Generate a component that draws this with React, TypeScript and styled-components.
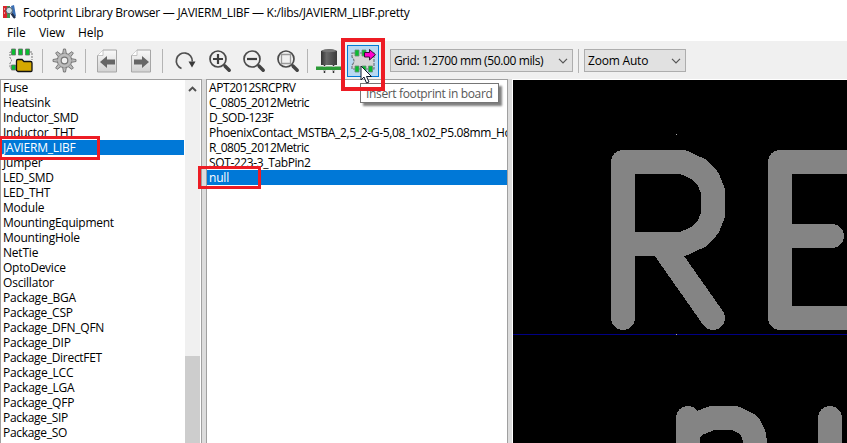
import React from "react";
import styled, { createGlobalStyle } from "styled-components";

const Global = createGlobalStyle`
  * { box-sizing: border-box; }
  body { margin: 0; overflow: hidden; }
`;

const Window = styled.div`
  position: relative;
  display: flex;
  flex-direction: column;
  width: 847px;
  height: 443px;
  overflow: hidden;
  background: #fff;
  color: #000;
  font: 12px "Open Sans", "Noto Sans", sans-serif;
`;

const TitleBar = styled.header`
  display: flex;
  align-items: center;
  gap: 7px;
  height: 24px;
  padding-left: 3px;
`;

const Text = styled.span<{ $ls?: number }>`
  display: block;
  line-height: 15px;
  white-space: pre;
  letter-spacing: ${(p) => p.$ls ?? -0.25}px;
`;

const MenuBar = styled.nav`
  display: flex;
  align-items: center;
  height: 17px;
  padding: 0 0 1px 7px;
`;

const MenuItem = styled.span<{ $w: number }>`
  width: ${(p) => p.$w}px;
  letter-spacing: -0.1px;
`;

const Toolbar = styled.div`
  display: flex;
  align-items: center;
  height: 38px;
  padding: 1px 0 0 8px;
  background: #f0f0f0;
`;

const Icon = styled.svg<{ $ml?: number }>`
  flex: none;
  display: block;
  margin-left: ${(p) => p.$ml ?? 0}px;
`;

const Separator = styled.i<{ $ml: number }>`
  flex: none;
  width: 1px;
  height: 24px;
  margin-left: ${(p) => p.$ml}px;
  background: #b4b4b4;
`;

const ActiveButton = styled.button`
  flex: none;
  width: 32px;
  height: 32px;
  margin: 1px 0 0 5px;
  padding: 0;
  border: 1px solid #0078d7;
  background: #b8d8f1;
`;

const Combo = styled.div<{ $w: number; $ml: number }>`
  flex: none;
  display: flex;
  align-items: center;
  justify-content: space-between;
  width: ${(p) => p.$w}px;
  height: 23px;
  margin-left: ${(p) => p.$ml}px;
  padding: 0 4px 0 3px;
  border: 1px solid #adadad;
  background: #e1e1e1;
`;

const Panels = styled.main`
  display: flex;
  flex: 1;
  min-height: 0;
  background: #dcdcdc;
`;

const ListBox = styled.section<{ $w: number; $mr: number }>`
  flex: none;
  display: flex;
  width: ${(p) => p.$w}px;
  margin-right: ${(p) => p.$mr}px;
  border: 1px solid #a0a0a0;
  border-bottom: 0;
  background: #fff;
  overflow: hidden;
`;

const Rows = styled.div`
  flex: 1;
  min-width: 0;
  overflow: hidden;
`;

const Row = styled.div<{ $selected?: boolean }>`
  height: 15px;
  padding-left: 2px;
  overflow: hidden;
  color: ${(p) => (p.$selected ? "#fff" : "#000")};
  background: ${(p) => (p.$selected ? "#0078d7" : "transparent")};
`;

const ScrollBar = styled.div`
  display: flex;
  flex-direction: column;
  justify-content: space-between;
  width: 16px;
  margin-left: 1px;
  border-right: 1px solid #fff;
  background: #f0f0f0;
`;

const Thumb = styled.div`
  height: 87px;
  background: #cdcdcd;
`;

const Canvas = styled.section`
  flex: 1;
  border-top: 1px solid #fff;
  border-left: 1px solid #fff;
  background: #000;
`;

const Highlight = styled.div<{ $x: number; $y: number; $w: number; $h: number; $b?: number }>`
  position: absolute;
  left: ${(p) => p.$x}px;
  top: ${(p) => p.$y}px;
  width: ${(p) => p.$w}px;
  height: ${(p) => p.$h}px;
  border: ${(p) => p.$b ?? 3}px solid #ed1c24;
`;

const Tooltip = styled.div`
  position: absolute;
  left: 360px;
  top: 83px;
  width: 139px;
  height: 20px;
  padding: 2px 0 0 5px;
  border: 1px solid #767676;
  background: #fff;
  box-shadow: 3px 3px 2px rgba(0, 0, 0, 0.5);
  color: #575757;
`;

const Cursor = styled.svg`
  position: absolute;
  left: 360px;
  top: 65px;
`;

const libraries: [string, number?][] = [
  ["Fuse"], ["Heatsink", -0.2], ["Inductor_SMD", -0.28], ["Inductor_THT", -0.28],
  ["JAVIERM_LIBF", -0.2], ["Jumper", -0.2], ["LED_SMD", -0.34], ["LED_THT"],
  ["Module", -0.2], ["MountingEquipment"], ["MountingHole"], ["NetTie", -0.2],
  ["OptoDevice"], ["Oscillator", -0.2], ["Package_BGA", -0.2], ["Package_CSP"],
  ["Package_DFN_QFN"], ["Package_DIP"], ["Package_DirectFET", -0.3], ["Package_LCC", -0.2],
  ["Package_LGA", -0.2], ["Package_QFP"], ["Package_SIP", -0.3], ["Package_SO", -0.3],
];

const footprints: [string, number?][] = [
  ["APT2012SRCPRV", -0.43], ["C_0805_2012Metric", -0.5], ["D_SOD-123F", -0.5],
  ["PhoenixContact_MSTBA_2,5_2-G-5,08_1x02_P5.08mm_Horizontal", -0.34],
  ["R_0805_2012Metric", -0.5], ["SOT-223-3_TabPin2", -0.38], ["null", -0.2],
];

const AppIcon = () => (
  <Icon width="13" height="15" viewBox="0 0 13 15">
    <path d="M0 1h4v12H0z" fill="#d8262c" />
    <path d="M4 1h3v12H4z" fill="#3c9a50" />
    <path d="M8 1l3-1 2 11-3 2z" fill="#3a6fb5" />
    <circle cx="6.2" cy="5.5" r="3.2" fill="#c9dfe6" stroke="#555b66" />
    <path d="M8.500 8.500l3.500 4.500" stroke="#23304a" strokeWidth="2.200" />
    <path d="M1 4h1M1 8h1" stroke="#fff" />
  </Icon>
);

const FolderIcon = () => (
  <Icon width="26" height="25" viewBox="0 0 26 25">
    <path d="M3 4H2v6q3 2 0 5v5h3M22 4h2v8" fill="none" stroke="#777" strokeDasharray="2 1" />
    <path d="M3.500 1h4v6h-4zM10.500 1h4v6h-4zM17.500 1h4v6h-4zM3.500 17h4v5h-4z" fill="#09bd30" stroke="#6b6b6b" strokeWidth=".8" />
    <path d="M8.500 22.500v-9.500q0-1.500 1.500-1.500h4l2 2h6.500q1.500 0 1.500 1.500v7.500q0 1-1 1H10z" fill="#d5a800" stroke="#111" strokeWidth="1.300" />
  </Icon>
);

const GearIcon = () => (
  <Icon $ml={9} width="25" height="25" viewBox="0 0 25 25">
    {[0, 45, 90, 135, 180, 225, 270, 315].map((a) => (
      <path key={a} d="M10.700 5.500l.8-4.500h2l.8 4.500" fill="#bcbcbc" stroke="#6f6f6f" strokeWidth=".9" transform={`rotate(${a} 12.500 12.500)`} />
    ))}
    <circle cx="12.500" cy="12.500" r="7.200" fill="#bcbcbc" stroke="#6f6f6f" strokeWidth="1" />
    <circle cx="12.500" cy="12.500" r="7" fill="none" stroke="#b3b3b3" strokeWidth="1" strokeDasharray="2.600 2.898" strokeDashoffset="1.300" />
    <circle cx="12.500" cy="12.500" r="3.300" fill="#f0f0f0" stroke="#777" strokeWidth="1.200" />
  </Icon>
);

const PageArrow = ({ right, ml }: { right?: boolean; ml: number }) => (
  <Icon $ml={ml} width="21" height="24" viewBox="0 0 21 24">
    <defs>
      <linearGradient id="page" x2="0" y2="1">
        <stop stopColor="#f9f9f9" />
        <stop offset="1" stopColor="#d2d2d2" />
      </linearGradient>
    </defs>
    <path d="M6 1h13.500v22h-19V6.500z" fill="url(#page)" stroke="#a6a6a6" />
    <path d="M6 1v5.500H.5" fill="#fff" stroke="#b8b8b8" strokeWidth=".8" />
    <path
      d="M3 13l7-6v3.500h8v5h-8V19z"
      fill="#666"
      transform={right ? "translate(21 0) scale(-1 1)" : undefined}
    />
  </Icon>
);

const RefreshIcon = () => (
  <Icon $ml={11} width="22" height="22" viewBox="0 0 22 22">
    <path d="M7.500 18.500A8 8 0 1 1 18.300 11.500" fill="none" stroke="#505050" strokeWidth="1.700" />
    <path d="M14.500 11.500h7l-3.500 6z" fill="#3a3a3a" />
  </Icon>
);

const Magnifier = ({ kind, ml }: { kind: "in" | "out" | "fit"; ml: number }) => (
  <Icon $ml={ml} width="24" height="24" viewBox="0 0 24 24">
    <circle cx="10" cy="10" r="8" fill="none" stroke="#4b4b4b" strokeWidth="1.700" />
    <path d="M15.500 15.500l1.500 1.500" stroke="#4b4b4b" strokeWidth="1.700" />
    <path d="M17.200 17.200l4 4" stroke="#444" strokeWidth="3.500" strokeLinecap="round" />
    {kind === "fit" ? (
      <path d="M5.500 5.500h9v9h-9z" fill="none" stroke="#9a9a9a" strokeWidth="1.300" />
    ) : (
      <path d={kind === "in" ? "M5 10h10M10 5v10" : "M5 10h10"} stroke="#3f3f3f" strokeWidth="2.200" />
    )}
  </Icon>
);

const ComponentIcon = () => (
  <Icon $ml={8} width="26" height="26" viewBox="0 0 26 26">
    <defs>
      <linearGradient id="body">
        <stop stopColor="#333" />
        <stop offset=".35" stopColor="#696969" />
        <stop offset="1" stopColor="#3b3b3b" />
      </linearGradient>
    </defs>
    <path d="M8.500 17v8M17.500 17v8" stroke="#333" strokeWidth="1.500" />
    <path d="M5 3q8-4 16 0v14H5z" fill="url(#body)" />
    <ellipse cx="13" cy="2.700" rx="7.500" ry="1.500" fill="#777" />
    <path d="M0 18.500h26v3.500H0z" fill="#2c9a37" />
    <path d="M7 18h3v1H7zM16 18h3v1h-3zM7 22h3v1H7zM16 22h3v1h-3z" fill="#bbb" />
  </Icon>
);

const InsertIcon = () => (
  <Icon width="30" height="30" viewBox="0 0 30 30">
    <path d="M4 7h22v16H4v-4q4-4 0-8z" fill="#d5d5d5" stroke="#6f7780" strokeWidth="1.200" strokeDasharray="3 1" />
    <path d="M7 4h4v6H7zM14 4h4v6h-4zM7 20h4v6H7zM14 20h4v6h-4zM20.500 20h4v6h-4z" fill="#09bd30" stroke="#6c8b78" strokeWidth=".8" />
    <path d="M16.500 6.500h5V3.500l6 5.200-6 5.300v-3h-5z" fill="#f0c" stroke="#301030" />
  </Icon>
);

const Chevron = () => (
  <Icon width="10" height="6" viewBox="0 0 10 6">
    <path d="M1 .8l4 4 4-4" fill="none" stroke="#555" strokeWidth="1.200" />
  </Icon>
);

const ScrollArrow = () => (
  <Icon $ml={3} width="9" height="17" viewBox="0 0 9 17">
    <path d="M1 11l3.500-3.500L8 11" fill="none" stroke="#505050" strokeWidth="1.900" />
  </Icon>
);

const FootprintDrawing = () => (
  <Icon width="334" height="363" viewBox="513 80 334 363" shapeRendering="crispEdges">
    <path d="M513 334.500h334" stroke="#000084" />
    <g fill="none" stroke="#848484" strokeWidth="24" strokeLinecap="round" strokeLinejoin="round">
      <path d="M623 318V162h60l17 8 8 9 5 12v24l-5 12-8 9-17 8h-60M661 244l52 74" />
      <path d="M870 162h-90v156h90M780 236h52" />
      <path d="M688 470v-52M688 433l9-9 15-6h23l14 7 5 10 1 8v30M830 418v50" />
    </g>
    <path d="M676 134h1v1h-1zM676 334h1v1h-1z" fill="#a9a9a9" />
  </Icon>
);

export default function App() {
  return (
    <Window>
      <Global />
      <TitleBar>
        <AppIcon />
        <Text $ls={-0.27}>Footprint Library Browser — JAVIERM_LIBF — K:/libs/JAVIERM_LIBF.pretty</Text>
      </TitleBar>
      <MenuBar>
        <MenuItem $w={32}>File</MenuItem>
        <MenuItem $w={39}>View</MenuItem>
        <MenuItem $w={30}>Help</MenuItem>
      </MenuBar>
      <Toolbar>
        <FolderIcon />
        <Separator $ml={8} />
        <GearIcon />
        <Separator $ml={8} />
        <PageArrow ml={11} />
        <PageArrow right ml={13} />
        <Separator $ml={10} />
        <RefreshIcon />
        <Magnifier kind="in" ml={12} />
        <Magnifier kind="out" ml={10} />
        <Magnifier kind="fit" ml={10} />
        <Separator $ml={7} />
        <ComponentIcon />
        <ActiveButton><InsertIcon /></ActiveButton>
        <Combo $w={183} $ml={11}><Text $ls={-0.38}>Grid: 1.2700 mm (50.00 mils)</Text><Chevron /></Combo>
        <Separator $ml={5} />
        <Combo $w={102} $ml={5}><Text $ls={-0.2}>Zoom Auto</Text><Chevron /></Combo>
      </Toolbar>
      <Panels>
        <ListBox $w={202} $mr={4}>
          <Rows>
            {libraries.map(([name, ls]) => (
              <Row key={name} $selected={name === "JAVIERM_LIBF"}><Text $ls={ls}>{name}</Text></Row>
            ))}
          </Rows>
          <ScrollBar><ScrollArrow /><Thumb /></ScrollBar>
        </ListBox>
        <ListBox $w={302} $mr={4}>
          <Rows>
            {footprints.map(([name, ls]) => (
              <Row key={name} $selected={name === "null"}><Text $ls={ls}>{name}</Text></Row>
            ))}
          </Rows>
        </ListBox>
        <Canvas><FootprintDrawing /></Canvas>
      </Panels>
      <Tooltip><Text $ls={-0.35}>Insert footprint in board</Text></Tooltip>
      <Highlight $x={341} $y={38} $w={44} $h={53} $b={4} />
      <Highlight $x={-1} $y={136} $w={101} $h={24} />
      <Highlight $x={198} $y={166} $w={63} $h={23} />
      <Cursor width="13" height="19" viewBox="0 0 13 19">
        <path d="M1 1v14l3-3 2.500 6 2.500-1-2.500-5.500h5z" fill="#fff" stroke="#111a2c" />
      </Cursor>
    </Window>
  );
}
